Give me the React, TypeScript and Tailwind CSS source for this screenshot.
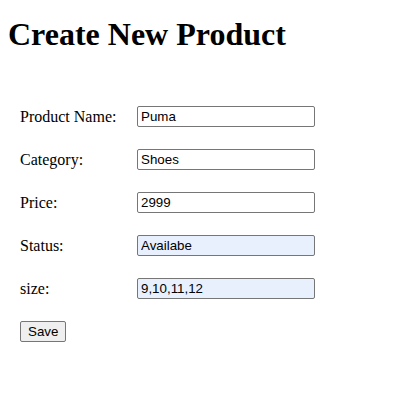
import { useState } from 'react';

type Field = {
  label: string;
  value: string;
  filled?: boolean;
};

const fields: Field[] = [
  { label: 'Product Name:', value: 'Puma' },
  { label: 'Category:', value: 'Shoes' },
  { label: 'Price:', value: '2999' },
  { label: 'Status:', value: 'Availabe', filled: true },
  { label: 'size:', value: '9,10,11,12', filled: true },
];

export default function App() {
  const [values, setValues] = useState(fields.map((f) => f.value));

  return (
    <div className="min-h-screen bg-white p-2 text-black font-['Liberation_Serif','Times_New_Roman',serif] text-base">
      <h1 className="text-[32px] font-bold leading-[37px] mt-[8px] mb-0">Create New Product</h1>

      {/* form rows */}
      <form className="mt-[42px] pl-3" onSubmit={(e) => e.preventDefault()}>
        {fields.map((f, i) => (
          <div key={f.label} className="flex items-center h-[43px]">
            <label className="w-[117px] shrink-0">{f.label}</label>
            <input
              value={values[i]}
              onChange={(e) => {
                const next = [...values];
                next[i] = e.target.value;
                setValues(next);
              }}
              className={`w-[178px] h-[21px] border border-[#767676] rounded-[2px] px-[3px] text-[13.33px] font-['Liberation_Sans',Arial,sans-serif] text-black outline-none ${
                f.filled ? 'bg-[#e8f0fe]' : 'bg-white'
              }`}
            />
          </div>
        ))}
        <button
          type="submit"
          className="mt-[11px] h-[21px] px-[7px] bg-[#efefef] border border-[#767676] rounded-[2px] text-[13.33px] font-['Liberation_Sans',Arial,sans-serif] text-black leading-none"
        >
          Save
        </button>
      </form>
    </div>
  );
}
